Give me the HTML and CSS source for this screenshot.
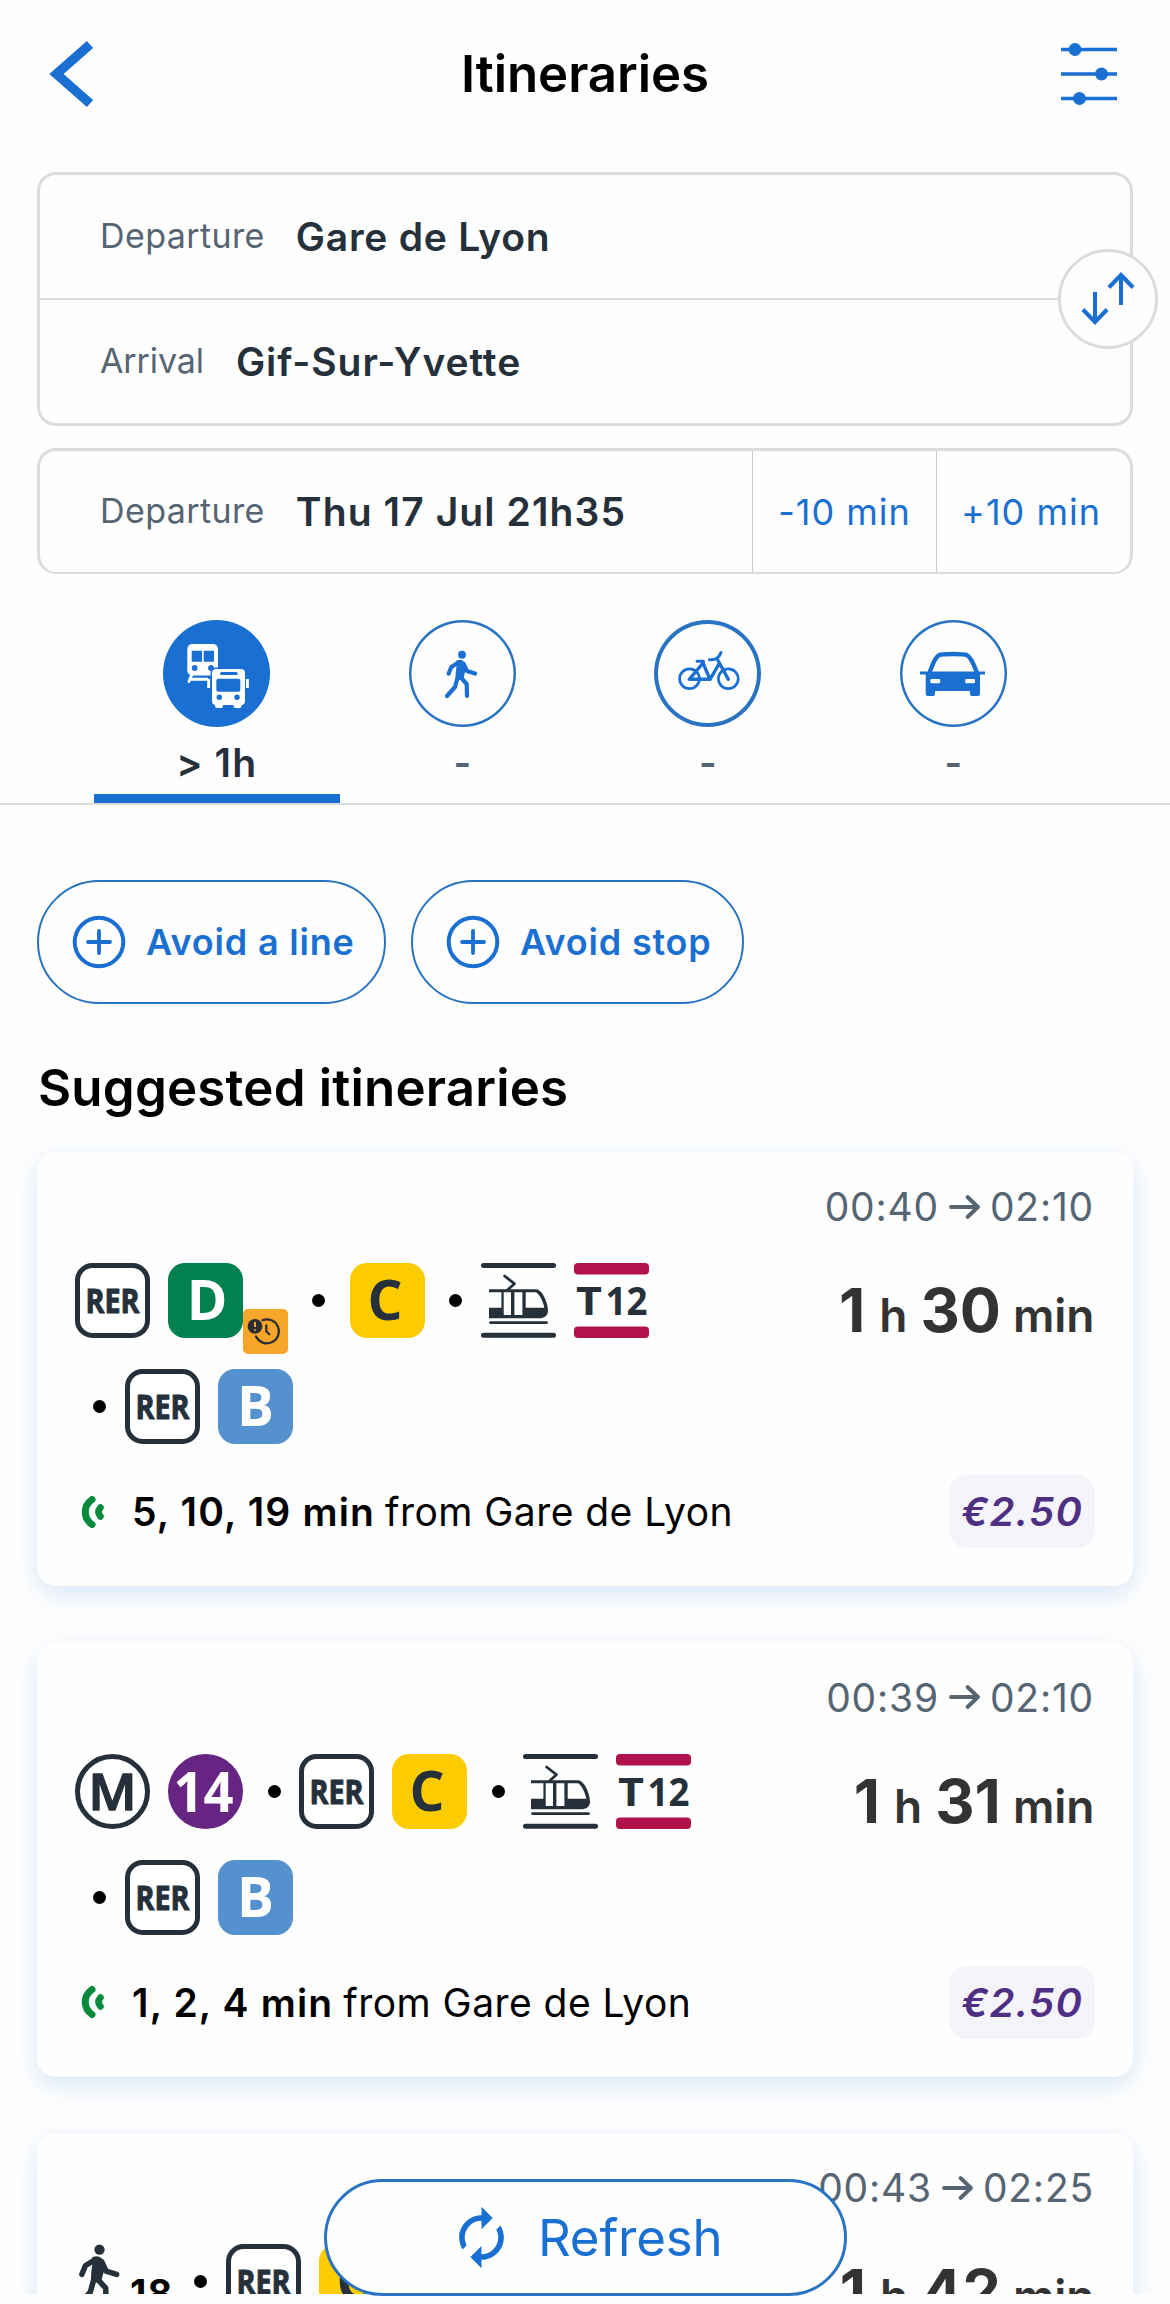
FILE: index.html
```html
<!DOCTYPE html>
<html lang="en">
<head>
<meta charset="utf-8">
<title>Itineraries</title>
<link rel="stylesheet" href="styles.css">
</head>
<body>
<svg class="defs" aria-hidden="true">
  <symbol id="frame" viewBox="0 0 75 75"><rect x="2.5" y="2.5" width="70" height="70" rx="15" fill="#fff" stroke="#25303b" stroke-width="5"/></symbol>
  <symbol id="tram-bars" viewBox="0 0 75 75"><rect width="75" height="11.5" rx="4" fill="#b1124b"/><rect y="63.5" width="75" height="11.5" rx="4" fill="#b1124b"/></symbol>
  <symbol id="tram" viewBox="0 0 75 75"><g fill="none" stroke="#25303b" stroke-linecap="round"><path d="M2.5 2.5h70M2.5 72.3h70" stroke-width="5"/><path d="M23.6 13 33.4 20.7 26 27.5" stroke-width="2.8" stroke-linejoin="round"/><path d="M9.500 59.6h56" stroke-width="2.8"/></g><path fill="#25303b" fill-rule="evenodd" d="M8 26.3h47c6 0 12 13 12 21.4 0 5-4 7.5-9 7.5H8zM8 29.3v15.4h12.4V29.3zM22.7 29.3V52H30V29.3zM33.4 29.3V52h8V29.3zM44.7 29.3v15.4h18.6C62 38 58 30 54.5 29.3z"/></symbol>
  <symbol id="walk" viewBox="0 0 34 50"><g transform="translate(-37 -28)"><circle cx="54" cy="33.7" r="3.9" fill="currentColor"/><path d="M48.5 39.6q4-2 7 .6l3 6-3 10.5-1.5 2-6.5 0q0-8 1-13z" fill="currentColor"/><path d="M49.5 42 43.3 46l-2.6 6.5M55.8 43l3.2 7 8 2.6M49.8 56 47 66l-8 9M52 55.500l6.700 7.500.3 12" fill="none" stroke="currentColor" stroke-width="4.2" stroke-linecap="round" stroke-linejoin="round"/></g></symbol>
  <symbol id="live" viewBox="0 0 26 36"><g fill="none" stroke="#078a3c" stroke-linecap="round"><path d="M12 5.5C3 12 3 24 12 30.500" stroke-width="7"/><path d="M20.500 13.500Q16.500 18 20.500 22.500" stroke-width="6.500"/></g></symbol>
  <symbol id="arrow" viewBox="0 0 32 26"><path d="M2 13h27M18.500 3 29 13 18.500 23" fill="none" stroke="#566573" stroke-width="3.800" stroke-linecap="round" stroke-linejoin="round"/></symbol>
  <symbol id="plus" viewBox="0 0 54 54"><circle cx="27" cy="27" r="24.300" fill="none" stroke="currentColor" stroke-width="4"/><path d="M27 16v22M16 27h22" stroke="currentColor" stroke-width="3.800" stroke-linecap="round"/></symbol>
</svg>

<main class="screen">
  <header class="topbar">
    <svg class="back" viewBox="0 0 48 68"><path d="M43 4.500 9.500 34 43 63.500" fill="none" stroke="currentColor" stroke-width="9.500"/></svg>
    <h1 class="title">Itineraries</h1>
    <svg class="filters" viewBox="0 0 56 62"><path d="M0 6.500h56M0 31h56M0 55.500h56" stroke="currentColor" stroke-width="3.500"/><g fill="currentColor"><circle cx="14" cy="6.500" r="6.500"/><circle cx="40.500" cy="31" r="6.500"/><circle cx="18.500" cy="55.500" r="6.500"/></g></svg>
  </header>

  <section class="route">
    <div class="field"><span class="label">Departure</span><span class="value">Gare de Lyon</span></div>
    <div class="field"><span class="label arrival">Arrival</span><span class="value city">Gif-Sur-Yvette</span></div>
    <button class="swap" aria-label="Swap"><svg viewBox="0 0 52 52"><path d="M13 19v29.500M.9 36.500 13 49l12.100-12.500M39 32V2.500M26.900 14.500 39 2l12.100 12.500" fill="none" stroke="currentColor" stroke-width="4"/></svg></button>
  </section>

  <section class="when">
    <div class="when-main"><span class="label">Departure</span><span class="value date">Thu 17 Jul 21h35</span></div>
    <button class="shift minus">-10 min</button>
    <button class="shift plus-ten">+10 min</button>
  </section>

  <nav class="modes">
    <div class="mode active">
      <div class="disc"><svg viewBox="0 0 106 106"><g fill="#fff"><rect x="23.300" y="23" width="30.700" height="31.500" rx="5"/><path d="M28 53 25 60.500M27 58.300h16" stroke="#fff" stroke-width="3" stroke-linecap="round"/></g><g fill="#1a6fd2"><path d="M27.700 29.700H38v11H27.700zM39.700 29.700H50v11H39.700z"/><circle cx="30.700" cy="47" r="2.900"/><circle cx="47" cy="47" r="2.900"/><rect x="46.600" y="46.600" width="36" height="39" rx="5"/></g><g fill="#fff"><rect x="48" y="48" width="33" height="36" rx="4"/><rect x="51" y="80" width="8" height="7" rx="2"/><rect x="69.500" y="80" width="8" height="7" rx="2"/><rect x="43.200" y="58" width="2.900" height="9"/><rect x="82" y="58" width="2.900" height="9"/></g><g fill="#1a6fd2"><rect x="56" y="51" width="17.700" height="3" rx="1.500"/><rect x="52.300" y="57.700" width="24" height="13" rx="2"/><circle cx="55.300" cy="76.300" r="2.700"/><circle cx="73" cy="76.300" r="2.700"/></g></svg></div>
      <span class="mode-time">&gt; 1h</span>
    </div>
    <div class="mode"><div class="disc"><svg class="walker"><use href="#walk"/></svg></div><span class="mode-time">-</span></div>
    <div class="mode bike"><div class="disc"><svg viewBox="0 0 106 106"><g fill="none" stroke="currentColor" stroke-width="2.700" stroke-linecap="round" stroke-linejoin="round"><circle cx="34.500" cy="57.700" r="9.900"/><circle cx="73.300" cy="57.700" r="9.900"/><path d="M34.300 58.300H55L64 43M34.300 58.300 48 42l7 16.300M63 39.500l10.300 18.800" stroke-width="3.400"/><path d="M42 40.300h6.500M54.500 38.700q8.500 1 11.500-7.200" stroke-width="3"/></g></svg></div><span class="mode-time">-</span></div>
    <div class="mode"><div class="disc"><svg viewBox="0 0 106 106"><path d="M29.500 51.500C33 43 35 36 39 34.200Q41 33 53 33t14 1.200C71 36 73.500 43 77 51.500" fill="none" stroke="currentColor" stroke-width="4.300"/><path fill="currentColor" fill-rule="evenodd" d="M20 50.500h65v3h-5V73q0 2-2 2h-6q-2 0-2-2v-3H35v3q0 2-2 2h-5.300q-2 0-2-2V53.500H20zM31.500 58q-1.200 0-1.200 2.100 0 2.200 1.200 2.200h7.600q1.200 0 1.200-2.200T39.100 58zM66.300 58q-1.200 0-1.200 2.100 0 2.200 1.200 2.200h7.600q1.200 0 1.200-2.200T73.900 58z"/></svg></div><span class="mode-time">-</span></div>
  </nav>

  <div class="avoid">
    <button class="pill"><svg><use href="#plus"/></svg><span>Avoid a line</span></button>
    <button class="pill short"><svg><use href="#plus"/></svg><span>Avoid stop</span></button>
  </div>

  <h2 class="subtitle">Suggested itineraries</h2>

  <section class="results">
    <article class="card">
      <div class="times"><span>00:40</span><svg><use href="#arrow"/></svg><span>02:10</span></div>
      <div class="body">
        <div class="legs">
          <div class="leg-row">
            <svg class="sq" viewBox="0 0 75 75"><use href="#frame"/><text x="10.500" y="49.500" textLength="54" lengthAdjust="spacingAndGlyphs" class="sign rer">RER</text></svg>
            <div class="flagged"><svg class="sq" viewBox="0 0 75 75"><rect width="75" height="75" rx="17" fill="#00814f"/><text x="39" y="57" class="sign letter paper">D</text></svg><svg class="alert" viewBox="0 0 45 45"><rect width="45" height="45" rx="5" fill="#f8a62a"/><g fill="none" stroke="#2b2f33" stroke-width="2.200" stroke-linecap="round"><path d="M19.500 11.200A12 12 0 1 1 13 27.500M23.300 16.300v6l3 3"/></g><circle cx="12" cy="17.300" r="7.400" fill="#2b2f33"/><path d="M12 13v5M12 20.200v1.600" stroke="#f8a62a" stroke-width="2"/></svg></div>
            <i class="dot wide"></i>
            <svg class="sq" viewBox="0 0 75 75"><rect width="75" height="75" rx="17" fill="#fccb00"/><text x="35" y="57" class="sign letter">C</text></svg>
            <i class="dot"></i>
            <svg class="sq"><use href="#tram"/></svg>
            <svg class="sq" viewBox="0 0 75 75"><use href="#tram-bars"/><text x="2" y="52" textLength="26" lengthAdjust="spacingAndGlyphs" class="sign tee">T</text><text x="31.500" y="52" textLength="42" lengthAdjust="spacingAndGlyphs" class="sign tee">12</text></svg>
          </div>
          <div class="leg-row">
            <i class="dot first"></i>
            <svg class="sq" viewBox="0 0 75 75"><use href="#frame"/><text x="10.500" y="49.500" textLength="54" lengthAdjust="spacingAndGlyphs" class="sign rer">RER</text></svg>
            <svg class="sq" viewBox="0 0 75 75"><rect width="75" height="75" rx="17" fill="#5591cf"/><text x="37.500" y="57" class="sign letter paper">B</text></svg>
          </div>
        </div>
        <div class="duration"><b>1</b><small>h</small><b>30</b><small>min</small></div>
      </div>
      <div class="foot"><div class="next"><svg><use href="#live"/></svg><strong>5, 10, 19 min</strong><span>from Gare de Lyon</span></div><span class="price">€2.50</span></div>
    </article>

    <article class="card">
      <div class="times"><span>00:39</span><svg><use href="#arrow"/></svg><span>02:10</span></div>
      <div class="body">
        <div class="legs">
          <div class="leg-row">
            <svg class="sq" viewBox="0 0 75 75"><circle cx="37.500" cy="37.500" r="35" fill="#fff" stroke="#25303b" stroke-width="5"/><text x="37.500" y="56" textLength="48" lengthAdjust="spacingAndGlyphs" class="sign metro">M</text></svg>
            <svg class="sq" viewBox="0 0 75 75"><circle cx="37.500" cy="37.500" r="37.500" fill="#662483"/><text x="5.500" y="57.500" textLength="60" lengthAdjust="spacingAndGlyphs" class="sign number paper">14</text></svg>
            <i class="dot"></i>
            <svg class="sq" viewBox="0 0 75 75"><use href="#frame"/><text x="10.500" y="49.500" textLength="54" lengthAdjust="spacingAndGlyphs" class="sign rer">RER</text></svg>
            <svg class="sq" viewBox="0 0 75 75"><rect width="75" height="75" rx="17" fill="#fccb00"/><text x="35" y="57" class="sign letter">C</text></svg>
            <i class="dot"></i>
            <svg class="sq"><use href="#tram"/></svg>
            <svg class="sq" viewBox="0 0 75 75"><use href="#tram-bars"/><text x="2" y="52" textLength="26" lengthAdjust="spacingAndGlyphs" class="sign tee">T</text><text x="31.500" y="52" textLength="42" lengthAdjust="spacingAndGlyphs" class="sign tee">12</text></svg>
          </div>
          <div class="leg-row">
            <i class="dot first"></i>
            <svg class="sq" viewBox="0 0 75 75"><use href="#frame"/><text x="10.500" y="49.500" textLength="54" lengthAdjust="spacingAndGlyphs" class="sign rer">RER</text></svg>
            <svg class="sq" viewBox="0 0 75 75"><rect width="75" height="75" rx="17" fill="#5591cf"/><text x="37.500" y="57" class="sign letter paper">B</text></svg>
          </div>
        </div>
        <div class="duration"><b>1</b><small>h</small><b>31</b><small>min</small></div>
      </div>
      <div class="foot"><div class="next"><svg><use href="#live"/></svg><strong>1, 2, 4 min</strong><span>from Gare de Lyon</span></div><span class="price">€2.50</span></div>
    </article>

    <article class="card">
      <div class="times"><span>00:43</span><svg><use href="#arrow"/></svg><span>02:25</span></div>
      <div class="body">
        <div class="legs">
          <div class="leg-row">
            <svg class="stroll"><use href="#walk"/></svg><span class="walk-min">18</span>
            <i class="dot after-walk"></i>
            <svg class="sq" viewBox="0 0 75 75"><use href="#frame"/><text x="10.500" y="49.500" textLength="54" lengthAdjust="spacingAndGlyphs" class="sign rer">RER</text></svg>
            <svg class="sq" viewBox="0 0 75 75"><rect width="75" height="75" rx="17" fill="#fccb00"/><text x="35" y="57" class="sign letter">C</text></svg>
          </div>
        </div>
        <div class="duration"><b>1</b><small>h</small><b>42</b><small>min</small></div>
      </div>
    </article>
  </section>
</main>

<button class="refresh"><svg viewBox="0 0 24 24"><path fill="currentColor" d="M12 6v3l4-4-4-4v3c-4.420 0-8 3.580-8 8 0 1.570.46 3.030 1.240 4.260L6.700 14.800c-.45-.83-.7-1.790-.7-2.800 0-3.310 2.690-6 6-6zm6.760 1.740L17.300 9.200c.44.84.7 1.790.7 2.800 0 3.310-2.690 6-6 6v-3l-4 4 4 4v-3c4.420 0 8-3.580 8-8 0-1.570-.46-3.030-1.240-4.260z"/></svg><span>Refresh</span></button>
</body>
</html>
```
FILE: styles.css
```css
* { box-sizing: border-box; }
body {
  margin: 0;
  position: relative;
  height: 2304px;
  overflow: hidden;
  background: #fefefe;
  color: #000;
  font-family: Inter, "Liberation Sans", sans-serif;
}
button { margin: 0; padding: 0; font: inherit; background: #fefefe; color: #1a6fd2; }
svg { display: block; flex: none; overflow: visible; }
.defs { position: absolute; width: 0; height: 0; }

/* Line signage */
.sign { font-family: "Open Sans", "Noto Sans", sans-serif; font-weight: 700; fill: #25303b; }
.rer { font-size: 34px; stroke: #25303b; stroke-width: 1px; stroke-linejoin: round; }
.metro { font-size: 51px; font-weight: 600; text-anchor: middle; stroke: #25303b; stroke-width: 1.5px; stroke-linejoin: round; }
.letter { font-size: 55px; text-anchor: middle; }
.number { font-size: 55px; }
.tee { font-size: 40px; }
.paper { fill: #fff; }

.screen { height: 2294px; overflow: hidden; padding: 0 37px; }

.topbar { display: flex; align-items: center; justify-content: space-between; height: 147px; padding: 0 16px 0 10px; color: #1a6fd2; }
.back { width: 48px; height: 68px; }
.filters { width: 56px; height: 62px; }
.title { margin: 0 0 0 14px; color: #000; font-size: 51px; font-weight: 600; letter-spacing: -0.1px; }

.route { position: relative; margin-top: 25px; height: 254px; border: 3px solid #dcdcdc; border-radius: 19px; }
.field { display: flex; align-items: center; height: 123px; padding-left: 60px; }
.field + .field { height: 125px; border-top: 2px solid #dcdcdc; }
.label { margin-right: 31px; padding-bottom: 3px; font-size: 34px; letter-spacing: 0.4px; color: #566573; }
.arrival { margin-right: 32px; letter-spacing: -0.1px; }
.value { font-size: 39px; font-weight: 600; letter-spacing: 0.75px; color: #25303b; }
.city { letter-spacing: 0.9px; }
.date { letter-spacing: 1.1px; }
.swap { position: absolute; right: -28px; top: 74px; display: grid; place-items: center; width: 100px; height: 100px; padding-right: 1px; border: 3px solid #dcdcdc; border-radius: 50%; }
.swap svg { width: 52px; height: 52px; }

.when { display: flex; margin-top: 22px; height: 126px; border: 3px solid #dcdcdc; border-bottom-width: 2px; border-radius: 19px; }
.when-main { flex: 1; display: flex; align-items: center; padding-left: 60px; }
.shift { border: 0; border-left: 1px solid #c8c8c8; background: none; font-size: 36px; letter-spacing: 1px; }
.minus { width: 184px; }
.plus-ten { width: 194px; padding-right: 5px; }

.modes { display: grid; grid-template-columns: repeat(4, 1fr); margin: 46px -37px 0; padding: 0 94px; height: 185px; border-bottom: 2px solid #dcdcdc; }
.mode { display: flex; flex-direction: column; align-items: center; height: 183px; color: #1a6fd2; }
.mode.active { border-bottom: 9px solid #1a6fd2; }
.disc { display: grid; place-items: center; width: 107px; height: 107px; border-radius: 50%; box-shadow: inset 0 0 0 2.5px #2873c2; }
.bike .disc { box-shadow: inset 0 0 0 4px #2873c2; }
.active .disc { background: #1a6fd2; box-shadow: none; }
.disc svg { width: 106px; height: 106px; }
.disc .walker { width: 34px; height: 50px; }
.mode-time { margin-top: 11px; font-size: 38px; line-height: 50px; font-weight: 600; color: #566573; }
.active .mode-time { font-size: 39px; letter-spacing: 1.2px; color: #25303b; }

.avoid { display: flex; gap: 25px; margin-top: 75px; }
.pill { display: flex; align-items: center; gap: 20px; width: 349px; height: 124px; padding-left: 33px; border: 2.5px solid #2873c2; border-radius: 63px; font-size: 36px; font-weight: 600; letter-spacing: 0.8px; }
.short { width: 333px; }
.pill svg { width: 54px; height: 54px; }

.subtitle { margin: 52px 0 0 1px; font-size: 51px; line-height: 64px; font-weight: 600; letter-spacing: 0.2px; }

.results { display: flex; flex-direction: column; gap: 56.67px; margin-top: 32px; }
.card { flex: none; height: 434px; width: 1096px; padding: 35px 39px 38px 38px; border-radius: 19px; background: #fefefe; box-shadow: 0 8px 26px rgba(60, 130, 210, 0.2); }
.times { display: flex; justify-content: flex-end; align-items: center; height: 39px; font-size: 39px; letter-spacing: 0.8px; color: #566573; }
.times svg { width: 32px; height: 26px; margin: 0 9px 0 10px; }
.body { display: flex; justify-content: space-between; height: 181px; margin-top: 37px; }
.legs { display: grid; grid-auto-rows: 75px; row-gap: 31px; }
.leg-row { display: flex; align-items: center; }
.sq { width: 75px; height: 75px; margin-right: 18.3px; }
.flagged { position: relative; width: 120px; }
.alert { position: absolute; left: 75px; top: 46px; width: 45px; height: 45px; }
.dot { width: 13px; height: 13px; margin: 0 18.5px 0 6px; border-radius: 50%; background: #000; }
.dot.first { margin-left: 18px; }
.dot.wide { margin: 0 25px 0 23.5px; }
.stroll { align-self: flex-start; width: 45px; height: 66px; margin: -2px 0 0 2px; color: #25303b; }
.walk-min { margin: 22px 21px 0 8px; font-size: 38px; line-height: 40px; font-weight: 700; letter-spacing: 1px; }
.dot.after-walk { margin-left: 0; }
.duration { margin-top: 10px; font-size: 61px; line-height: 75px; color: #333; white-space: nowrap; }
.duration b { font-weight: 700; }
.duration small { margin: 0 13px 0 14px; font-size: 46px; line-height: 1; font-weight: 600; }
.duration small:last-child { margin: 0 -0.5px 0 12px; }
.foot { display: flex; justify-content: space-between; height: 73px; margin: 31px -1px 0 0; }
.next { display: flex; align-items: center; font-size: 39px; letter-spacing: 0.45px; }
.next svg { width: 26px; height: 36px; margin: 0 26px 0 5px; }
.next strong { margin-right: 10px; font-weight: 600; letter-spacing: 1.15px; }
.price { display: grid; place-items: center; width: 146px; border-radius: 18px; background: #f5f4fa; color: #4f2f84; font-size: 40px; font-style: italic; font-weight: 600; letter-spacing: 1.2px; }

.refresh { position: absolute; left: 324px; top: 2179px; display: flex; align-items: center; width: 523px; height: 117px; padding-left: 121px; border: 3px solid #2873c2; border-radius: 59px; font-size: 51px; letter-spacing: -0.2px; }
.refresh svg { width: 67px; height: 67px; margin-right: 23px; }
```
